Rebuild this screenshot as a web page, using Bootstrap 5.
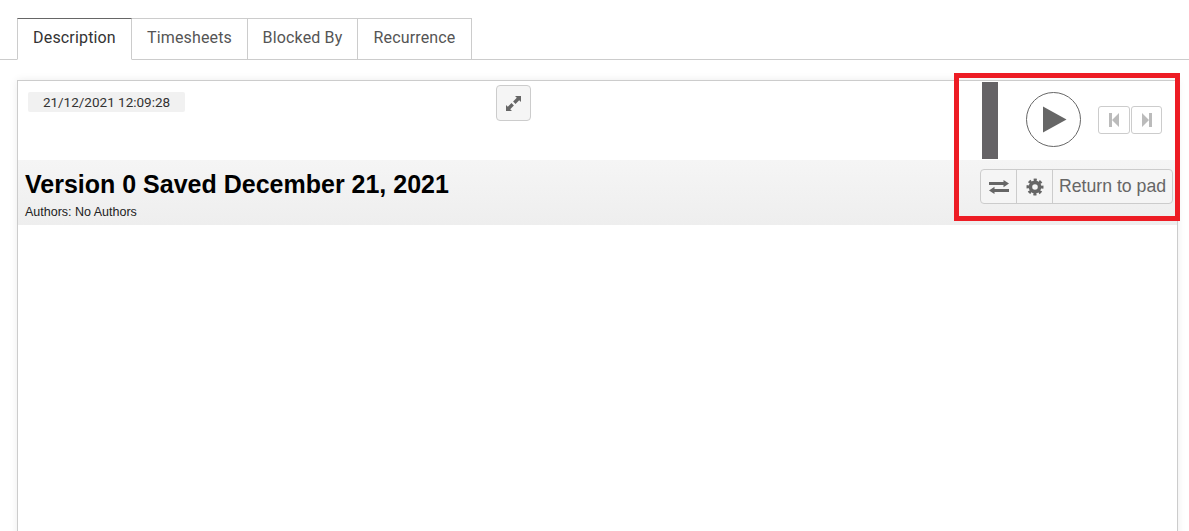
<!DOCTYPE html>
<html lang="en">
<head>
    <meta charset="UTF-8">
    <meta name="viewport" content="width=device-width, initial-scale=1.0">
    <title>Description</title>
    <link rel="stylesheet" href="https://cdn.jsdelivr.net/npm/bootstrap@5.3.0/dist/css/bootstrap.min.css">
    <style>
        body {
            background: #fff;
            height: 531px;
            overflow: hidden;
            position: relative;
            font-family: Roboto, "Liberation Sans", sans-serif;
        }
        .tab-strip {
            padding: 18px 0 0 17px;
            border-bottom: 1px solid #ccc;
            height: 60px;
            margin-bottom: 20px !important;
        }
        .tab-strip .nav-link {
            height: 42px;
            padding: 8px 0 0;
            text-align: center;
            font-size: 16px;
            letter-spacing: .16px;
            line-height: 21px;
            color: #555;
            border: 1px solid #ccc;
            border-left: 0;
            border-radius: 0;
            margin: 0;
            background: #fff;
        }
        .tab-strip .nav-item:nth-child(1) .nav-link { border-left: 1px solid #ccc; width: 115px; }
        .tab-strip .nav-item:nth-child(2) .nav-link { width: 116px; }
        .tab-strip .nav-item:nth-child(3) .nav-link { width: 110px; }
        .tab-strip .nav-item:nth-child(4) .nav-link { width: 114px; }
        .tab-strip .nav-link.active {
            color: #333;
            border-top-color: #666;
            border-bottom-color: #fff;
        }
        .pad-frame {
            margin: 0 11px 0 17px;
            height: 460px;
            border: 1px solid #ccc;
            box-shadow: 0 0 8px rgba(0, 0, 0, .08);
        }
        .head-row {
            height: 79px;
            padding-left: 10px;
        }
        .stamp-box {
            width: 157px;
            height: 20px;
            margin-top: 11px;
            background: #f1f1f1;
            border-radius: 2px;
            font-size: 13.5px;
            line-height: 20px;
            color: #333;
            text-align: center;
        }
        .expand-btn {
            width: 35px;
            height: 36px;
            margin: 4px 0 0 311px;
            padding: 0;
            background: #f5f5f5;
            border: 1px solid #ccc;
            border-radius: 4px;
        }
        .slider-bar {
            width: 16px;
            height: 77px;
            margin: 1px 0 0 451px;
            background: #656366;
        }
        .play-circle {
            width: 55px;
            height: 55px;
            margin: 11px 0 0 28px;
            padding: 0 0 0 2px;
            background: #fff;
            border: 1px solid #666;
            border-radius: 50%;
        }
        .step-btn {
            width: 32px;
            height: 28px;
            margin-top: 25px;
            padding: 0;
            background: #fff;
            border: 1px solid #ccc;
            border-radius: 3px;
        }
        .step-first { margin-left: 17px; }
        .step-last { margin-left: 1px; width: 31px; }
        .version-bar {
            height: 65px;
            padding: 0 4px 0 7px;
            background: linear-gradient(#f5f5f5, #eee);
        }
        .version-title {
            font-family: "Liberation Sans", Arial, sans-serif;
            font-weight: 700;
            font-size: 25px;
            line-height: 28px;
            color: #000;
            margin: 10px 0 0;
        }
        .version-authors {
            font-family: "Liberation Sans", Arial, sans-serif;
            font-size: 12.5px;
            line-height: 14px;
            color: #222;
            margin: 7px 0 0;
        }
        .pad-tools {
            height: 35px;
            margin-top: 9px;
            background: #f5f5f5;
            border: 1px solid #ccc;
            border-radius: 4px;
        }
        .pad-tools button {
            height: 33px;
            padding: 0;
            background: transparent;
            border: 0;
            border-right: 1px solid #ccc;
            color: #666;
        }
        .pad-tools button:last-child { border-right: 0; }
        .tool-swap, .tool-gear { width: 36px; }
        .tool-return {
            width: 119px;
            font-family: "Liberation Sans", Arial, sans-serif;
            font-size: 17.7px;
            line-height: 33px;
        }
        .red-mark {
            position: absolute;
            left: 954px;
            top: 73px;
            width: 226px;
            height: 148px;
            border: 5px solid #ed1c24;
            pointer-events: none;
        }
    </style>
</head>
<body>
    <ul class="nav tab-strip">
        <li class="nav-item"><a class="nav-link active" href="#">Description</a></li>
        <li class="nav-item"><a class="nav-link" href="#">Timesheets</a></li>
        <li class="nav-item"><a class="nav-link" href="#">Blocked By</a></li>
        <li class="nav-item"><a class="nav-link" href="#">Recurrence</a></li>
    </ul>

    <div class="pad-frame">
        <div class="head-row d-flex align-items-start">
            <div class="stamp-box">21/12/2021 12:09:28</div>
            <button class="expand-btn d-flex align-items-center justify-content-center" type="button" aria-label="Expand">
                <svg width="17" height="17" viewBox="0 0 17 17" fill="#666">
                    <path d="M10 1H16V7L14.2 5.2L10.5 8.9L8.1 6.5L11.8 2.8Z"/>
                    <path d="M7 16H1V10L2.8 11.8L6.5 8.1L8.9 10.5L5.2 14.2Z"/>
                </svg>
            </button>
            <div class="slider-bar"></div>
            <button class="play-circle d-flex align-items-center justify-content-center" type="button" aria-label="Play">
                <svg width="25" height="27" viewBox="0 0 25 27" fill="#666"><path d="M1 0.5L24.5 13.5L1 26.5Z"/></svg>
            </button>
            <button class="step-btn step-first d-flex align-items-center justify-content-center" type="button" aria-label="Previous">
                <svg width="10" height="14" viewBox="0 0 10 14" fill="#bbb"><path d="M0 0H3V14H0ZM3 7L10 0V14Z"/></svg>
            </button>
            <button class="step-btn step-last d-flex align-items-center justify-content-center" type="button" aria-label="Next">
                <svg width="10" height="14" viewBox="0 0 10 14" fill="#bbb"><path d="M10 0H7V14H10ZM7 7L0 0V14Z"/></svg>
            </button>
        </div>

        <div class="version-bar d-flex justify-content-between align-items-start">
            <div>
                <h1 class="version-title">Version 0 Saved December 21, 2021</h1>
                <p class="version-authors">Authors: No Authors</p>
            </div>
            <div class="pad-tools d-flex">
                <button class="tool-swap" type="button" aria-label="Compare">
                    <svg width="20" height="14" viewBox="0 0 20 14" fill="#666">
                        <path d="M0 2.1H14.5V0L20 3.6L14.5 7.2V5.1H0Z"/>
                        <path d="M20 8.9H5.5V6.8L0 10.4L5.5 14V11.9H20Z"/>
                    </svg>
                </button>
                <button class="tool-gear" type="button" aria-label="Settings">
                    <svg width="18" height="18" viewBox="0 0 18 18" fill="none" stroke="#666">
                        <circle cx="9" cy="9" r="4.6" stroke-width="3.6"/>
                        <circle cx="9" cy="9" r="7" stroke-width="3" stroke-dasharray="3 2.5" stroke-dashoffset="1.5"/>
                    </svg>
                </button>
                <button class="tool-return" type="button">Return to pad</button>
            </div>
        </div>
    </div>

    <div class="red-mark"></div>

    <script src="https://cdn.jsdelivr.net/npm/bootstrap@5.3.0/dist/js/bootstrap.bundle.min.js"></script>
</body>
</html>
